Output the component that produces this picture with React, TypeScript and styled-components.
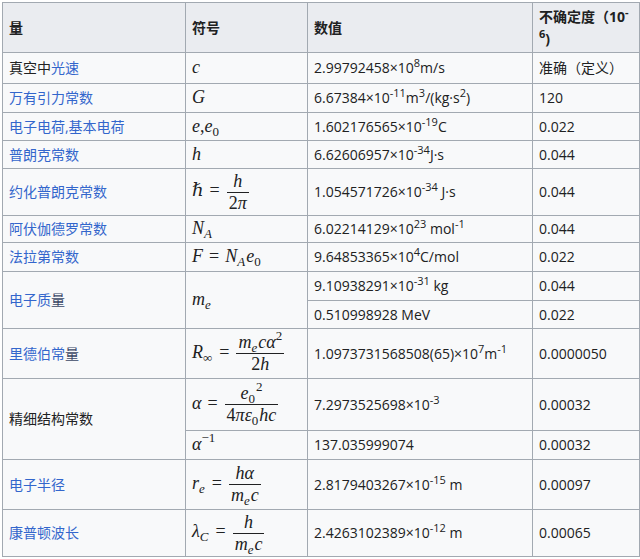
import React from "react";
import styled, { createGlobalStyle } from "styled-components";

const Global = createGlobalStyle`
  html, body { margin: 0; padding: 0; background: #ffffff; }
  body {
    font-family: "Open Sans", "Noto Sans CJK SC", sans-serif;
    font-size: 14px;
    color: #202122;
  }
`;

const Page = styled.div`
  padding: 2px 0 0 2px;
`;

const Table = styled.table`
  border-collapse: collapse;
  table-layout: fixed;
  width: 637px;
  background: #f8f9fa;
  color: #202122;
  border: 1px solid #a2a9b1;
  line-height: 20px;
`;

const Row = styled.tr<{ $h: number }>`
  height: ${(p) => p.$h}px;
`;

const Th = styled.th`
  background: #eaecf0;
  border: 1px solid #a2a9b1;
  padding: 2px 4px 2px 6px;
  text-align: left;
  font-weight: bold;
  vertical-align: middle;
  white-space: nowrap;
  line-height: 22px;
`;

const Td = styled.td`
  border: 1px solid #a2a9b1;
  padding: 0 4px 0 6px;
  vertical-align: middle;
  white-space: nowrap;
`;

const Link = styled.span<{ $tone?: "dark" }>`
  color: ${(p) => (p.$tone === "dark" ? "#3b4866" : "#3366cc")};
`;

const Sup = styled.sup`
  font-size: 11px;
  line-height: 0;
  vertical-align: 6px;
`;

const M = styled.span`
  font-family: "Liberation Serif", "DejaVu Serif", serif;
  font-style: italic;
  font-size: 18px;
  line-height: 1;
  color: #202122;
`;

const Up = styled.span`
  font-style: normal;
`;

const MSub = styled.sub`
  font-size: 13px;
  line-height: 0;
  vertical-align: -4px;
  margin-right: 1px;
`;

const MSup = styled.sup`
  font-size: 13px;
  line-height: 0;
  vertical-align: 8px;
`;

const Eq = styled.span`
  font-style: normal;
  margin: 0 6px;
`;

const Frac = styled.span`
  display: inline-flex;
  flex-direction: column;
  align-items: stretch;
  vertical-align: middle;
  margin: 0 1px;
`;

const Num = styled.span`
  text-align: center;
  line-height: 19px;
  padding: 0 2px 1px;
  border-bottom: 1px solid #202122;
`;

const Den = styled.span`
  text-align: center;
  line-height: 19px;
  padding: 1px 2px 0;
`;

const Col = styled.col<{ $w: number }>`
  width: ${(p) => p.$w}px;
`;

export default function App() {
  return (
    <>
      <Global />
      <Page>
        <Table>
          <colgroup>
            <Col $w={183} />
            <Col $w={122} />
            <Col $w={225} />
            <Col $w={107} />
          </colgroup>
          <thead>
            <Row $h={50}>
              <Th>量</Th>
              <Th>符号</Th>
              <Th>数值</Th>
              <Th>
                不确定度（10<Sup>-</Sup>
                <br />
                <Sup>6</Sup>)
              </Th>
            </Row>
          </thead>
          <tbody>
            <Row $h={31}>
              <Td>
                真空中<Link>光速</Link>
              </Td>
              <Td>
                <M>c</M>
              </Td>
              <Td>
                2.99792458×10<Sup>8</Sup>m/s
              </Td>
              <Td>准确（定义）</Td>
            </Row>
            <Row $h={29}>
              <Td>
                <Link>万有引力常数</Link>
              </Td>
              <Td>
                <M>G</M>
              </Td>
              <Td>
                6.67384×10<Sup>-11</Sup>m<Sup>3</Sup>/(kg·s<Sup>2</Sup>)
              </Td>
              <Td>120</Td>
            </Row>
            <Row $h={28}>
              <Td>
                <Link>电子电荷,基本电荷</Link>
              </Td>
              <Td>
                <M>
                  e<Up>,</Up>e
                  <MSub>
                    <Up>0</Up>
                  </MSub>
                </M>
              </Td>
              <Td>
                1.602176565×10<Sup>-19</Sup>C
              </Td>
              <Td>0.022</Td>
            </Row>
            <Row $h={28}>
              <Td>
                <Link>普朗克常数</Link>
              </Td>
              <Td>
                <M>h</M>
              </Td>
              <Td>
                6.62606957×10<Sup>-34</Sup>J·s
              </Td>
              <Td>0.044</Td>
            </Row>
            <Row $h={47}>
              <Td>
                <Link>约化普朗克常数</Link>
              </Td>
              <Td>
                <M>
                  ℏ<Eq>=</Eq>
                  <Frac>
                    <Num>h</Num>
                    <Den>
                      <Up>2</Up>π
                    </Den>
                  </Frac>
                </M>
              </Td>
              <Td>
                1.054571726×10<Sup>-34</Sup> J·s
              </Td>
              <Td>0.044</Td>
            </Row>
            <Row $h={27}>
              <Td>
                <Link>阿伏伽德罗常数</Link>
              </Td>
              <Td>
                <M>
                  N<MSub>A</MSub>
                </M>
              </Td>
              <Td>
                6.02214129×10<Sup>23</Sup> mol<Sup>-1</Sup>
              </Td>
              <Td>0.044</Td>
            </Row>
            <Row $h={29}>
              <Td>
                <Link>法拉第常数</Link>
              </Td>
              <Td>
                <M>
                  F<Eq>=</Eq>N<MSub>A</MSub>e
                  <MSub>
                    <Up>0</Up>
                  </MSub>
                </M>
              </Td>
              <Td>
                9.64853365×10<Sup>4</Sup>C/mol
              </Td>
              <Td>0.022</Td>
            </Row>
            <Row $h={29}>
              <Td rowSpan={2}>
                <Link>电子质</Link>
                <Link $tone="dark">量</Link>
              </Td>
              <Td rowSpan={2}>
                <M>
                  m<MSub>e</MSub>
                </M>
              </Td>
              <Td>
                9.10938291×10<Sup>-31</Sup> kg
              </Td>
              <Td>0.044</Td>
            </Row>
            <Row $h={28}>
              <Td>0.510998928 MeV</Td>
              <Td>0.022</Td>
            </Row>
            <Row $h={50}>
              <Td>
                <Link>里德伯常</Link>
                <Link $tone="dark">量</Link>
              </Td>
              <Td>
                <M>
                  R<MSub>
                    <Up>∞</Up>
                  </MSub>
                  <Eq>=</Eq>
                  <Frac>
                    <Num>
                      m<MSub>e</MSub>cα<MSup>
                        <Up>2</Up>
                      </MSup>
                    </Num>
                    <Den>
                      <Up>2</Up>h
                    </Den>
                  </Frac>
                </M>
              </Td>
              <Td>
                1.0973731568508(65)×10<Sup>7</Sup>m<Sup>-1</Sup>
              </Td>
              <Td>0.0000050</Td>
            </Row>
            <Row $h={52}>
              <Td rowSpan={2}>精细结构常数</Td>
              <Td>
                <M>
                  α<Eq>=</Eq>
                  <Frac>
                    <Num>
                      e<MSub>
                        <Up>0</Up>
                      </MSub>
                      <MSup>
                        <Up>2</Up>
                      </MSup>
                    </Num>
                    <Den>
                      <Up>4</Up>πε<MSub>
                        <Up>0</Up>
                      </MSub>
                      hc
                    </Den>
                  </Frac>
                </M>
              </Td>
              <Td>
                7.2973525698×10<Sup>-3</Sup>
              </Td>
              <Td>0.00032</Td>
            </Row>
            <Row $h={29}>
              <Td>
                <M>
                  α<MSup>
                    <Up>−1</Up>
                  </MSup>
                </M>
              </Td>
              <Td>137.035999074</Td>
              <Td>0.00032</Td>
            </Row>
            <Row $h={50}>
              <Td>
                <Link>电子半径</Link>
              </Td>
              <Td>
                <M>
                  r<MSub>e</MSub>
                  <Eq>=</Eq>
                  <Frac>
                    <Num>hα</Num>
                    <Den>
                      m<MSub>e</MSub>c
                    </Den>
                  </Frac>
                </M>
              </Td>
              <Td>
                2.8179403267×10<Sup>-15</Sup> m
              </Td>
              <Td>0.00097</Td>
            </Row>
            <Row $h={47}>
              <Td>
                <Link>康普顿波长</Link>
              </Td>
              <Td>
                <M>
                  λ<MSub>C</MSub>
                  <Eq>=</Eq>
                  <Frac>
                    <Num>h</Num>
                    <Den>
                      m<MSub>e</MSub>c
                    </Den>
                  </Frac>
                </M>
              </Td>
              <Td>
                2.4263102389×10<Sup>-12</Sup> m
              </Td>
              <Td>0.00065</Td>
            </Row>
          </tbody>
        </Table>
      </Page>
    </>
  );
}
